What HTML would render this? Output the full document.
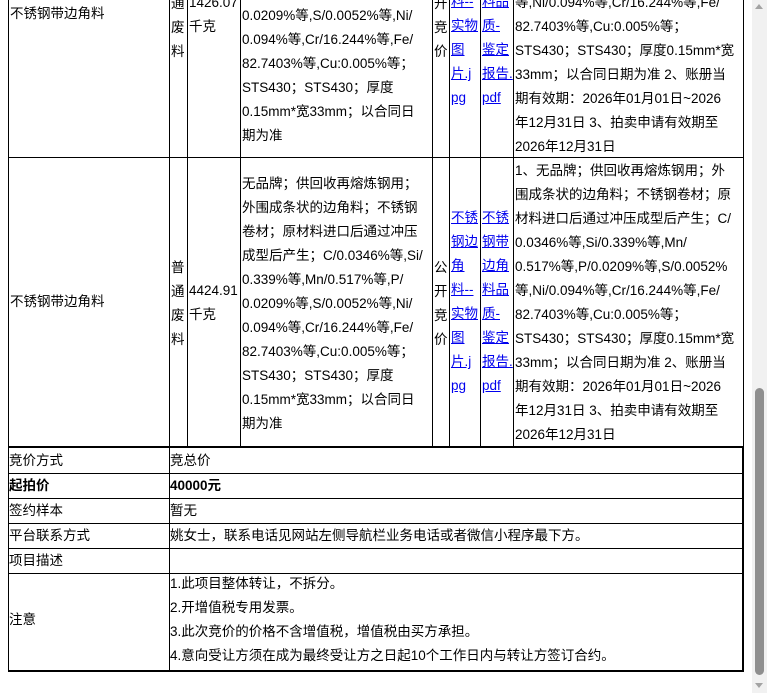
<!DOCTYPE html>
<html><head><meta charset="utf-8"><style>
html,body{margin:0;padding:0;width:767px;height:693px;overflow:hidden;background:#fff;
font-family:"Liberation Sans","Noto Sans CJK SC",sans-serif;font-size:13.5px;color:#000;}
.c{position:absolute;box-sizing:border-box;border:1px solid #000;overflow:hidden;}
.t{position:absolute;left:1px;line-height:24px;white-space:nowrap;}
a{color:#0000ee;text-decoration:underline;}
</style></head><body>

<div class="c" style="left:8px;top:-131px;width:162px;height:289px"><div class="t" style="top:132px">不锈钢带边角料</div></div>
<div class="c" style="left:169px;top:-131px;width:19px;height:289px"><div class="t" style="top:98px">普<br>通<br>废<br>料</div></div>
<div class="c" style="left:187px;top:-131px;width:54px;height:289px"><div class="t" style="top:121px">1426.07<br>千克</div></div>
<div class="c" style="left:240px;top:-131px;width:193px;height:289px"><div class="t" style="top:14px">无品牌；供回收再熔炼钢用；<br>外围成条状的边角料；不锈钢<br>卷材；原材料进口后通过冲压<br>成型后产生；C/0.0346%等,Si/<br>0.339%等,Mn/0.517%等,P/<br>0.0209%等,S/0.0052%等,Ni/<br>0.094%等,Cr/16.244%等,Fe/<br>82.7403%等,Cu:0.005%等；<br>STS430；STS430；厚度<br>0.15mm*宽33mm；以合同日<br>期为准</div></div>
<div class="c" style="left:432px;top:-131px;width:18px;height:289px"><div class="t" style="top:98px">公<br>开<br>竞<br>价</div></div>
<div class="c" style="left:449px;top:-131px;width:32px;height:289px"><div class="t" style="top:48px"><a>不锈<br>钢边<br>角<br>料--<br>实物<br>图<br>片.j<br>pg</a></div></div>
<div class="c" style="left:480px;top:-131px;width:34px;height:289px"><div class="t" style="top:48px"><a>不锈<br>钢带<br>边角<br>料品<br>质-<br>鉴定<br>报告.<br>pdf</a></div></div>
<div class="c" style="left:513px;top:-131px;width:231px;height:289px"><div class="t" style="top:1px">1、无品牌；供回收再熔炼钢用；外<br>围成条状的边角料；不锈钢卷材；原<br>材料进口后通过冲压成型后产生；C/<br>0.0346%等,Si/0.339%等,Mn/<br>0.517%等,P/0.0209%等,S/0.0052%<br>等,Ni/0.094%等,Cr/16.244%等,Fe/<br>82.7403%等,Cu:0.005%等；<br>STS430；STS430；厚度0.15mm*宽<br>33mm；以合同日期为准 2、账册当<br>期有效期：2026年01月01日~2026<br>年12月31日 3、拍卖申请有效期至<br>2026年12月31日</div></div>

<div class="c" style="left:8px;top:157px;width:162px;height:290px"><div class="t" style="top:132px">不锈钢带边角料</div></div>
<div class="c" style="left:169px;top:157px;width:19px;height:290px"><div class="t" style="top:98px">普<br>通<br>废<br>料</div></div>
<div class="c" style="left:187px;top:157px;width:54px;height:290px"><div class="t" style="top:121px">4424.91<br>千克</div></div>
<div class="c" style="left:240px;top:157px;width:193px;height:290px"><div class="t" style="top:14px">无品牌；供回收再熔炼钢用；<br>外围成条状的边角料；不锈钢<br>卷材；原材料进口后通过冲压<br>成型后产生；C/0.0346%等,Si/<br>0.339%等,Mn/0.517%等,P/<br>0.0209%等,S/0.0052%等,Ni/<br>0.094%等,Cr/16.244%等,Fe/<br>82.7403%等,Cu:0.005%等；<br>STS430；STS430；厚度<br>0.15mm*宽33mm；以合同日<br>期为准</div></div>
<div class="c" style="left:432px;top:157px;width:18px;height:290px"><div class="t" style="top:98px">公<br>开<br>竞<br>价</div></div>
<div class="c" style="left:449px;top:157px;width:32px;height:290px"><div class="t" style="top:48px"><a>不锈<br>钢边<br>角<br>料--<br>实物<br>图<br>片.j<br>pg</a></div></div>
<div class="c" style="left:480px;top:157px;width:34px;height:290px"><div class="t" style="top:48px"><a>不锈<br>钢带<br>边角<br>料品<br>质-<br>鉴定<br>报告.<br>pdf</a></div></div>
<div class="c" style="left:513px;top:157px;width:231px;height:290px"><div class="t" style="top:1px">1、无品牌；供回收再熔炼钢用；外<br>围成条状的边角料；不锈钢卷材；原<br>材料进口后通过冲压成型后产生；C/<br>0.0346%等,Si/0.339%等,Mn/<br>0.517%等,P/0.0209%等,S/0.0052%<br>等,Ni/0.094%等,Cr/16.244%等,Fe/<br>82.7403%等,Cu:0.005%等；<br>STS430；STS430；厚度0.15mm*宽<br>33mm；以合同日期为准 2、账册当<br>期有效期：2026年01月01日~2026<br>年12月31日 3、拍卖申请有效期至<br>2026年12月31日</div></div>

<div style="position:absolute;left:8px;top:446px;width:736px;height:226px;box-sizing:border-box;border:2px solid #000;border-left-width:1px;"></div>
<div style="position:absolute;left:169px;top:447px;width:1px;height:224px;background:#000"></div>
<div style="position:absolute;left:8px;top:473px;width:735px;height:1px;background:#000"></div>
<div style="position:absolute;left:8px;top:498px;width:735px;height:1px;background:#000"></div>
<div style="position:absolute;left:8px;top:523px;width:735px;height:1px;background:#000"></div>
<div style="position:absolute;left:8px;top:548px;width:735px;height:1px;background:#000"></div>
<div style="position:absolute;left:8px;top:573px;width:735px;height:1px;background:#000"></div>

<div class="t" style="left:9px;top:449px">竞价方式</div>
<div class="t" style="left:170px;top:449px">竞总价</div>
<div class="t" style="left:9px;top:474px;font-weight:bold">起拍价</div>
<div class="t" style="left:170px;top:474px;font-weight:bold">40000元</div>
<div class="t" style="left:9px;top:499px">签约样本</div>
<div class="t" style="left:170px;top:499px">暂无</div>
<div class="t" style="left:9px;top:524px">平台联系方式</div>
<div class="t" style="left:170px;top:524px">姚女士，联系电话见网站左侧导航栏业务电话或者微信小程序最下方。</div>
<div class="t" style="left:9px;top:549px">项目描述</div>
<div class="t" style="left:9px;top:608px">注意</div>
<div class="t" style="left:170px;top:572px">1.此项目整体转让，不拆分。<br>2.开增值税专用发票。<br>3.此次竞价的价格不含增值税，增值税由买方承担。<br>4.意向受让方须在成为最终受让方之日起10个工作日内与转让方签订合约。</div>

<div style="position:absolute;left:752px;top:0;width:15px;height:693px;background:#f1f1f1"></div>
<div style="position:absolute;left:755px;top:388px;width:9px;height:287px;background:#8f8f8f;border-radius:5px"></div>
<div style="position:absolute;left:755px;top:4px;width:0;height:0;border-left:4.5px solid transparent;border-right:4.5px solid transparent;border-bottom:5px solid #a3a3a3"></div>
<div style="position:absolute;left:755px;top:683px;width:0;height:0;border-left:4.5px solid transparent;border-right:4.5px solid transparent;border-top:5px solid #a3a3a3"></div>
</body></html>
